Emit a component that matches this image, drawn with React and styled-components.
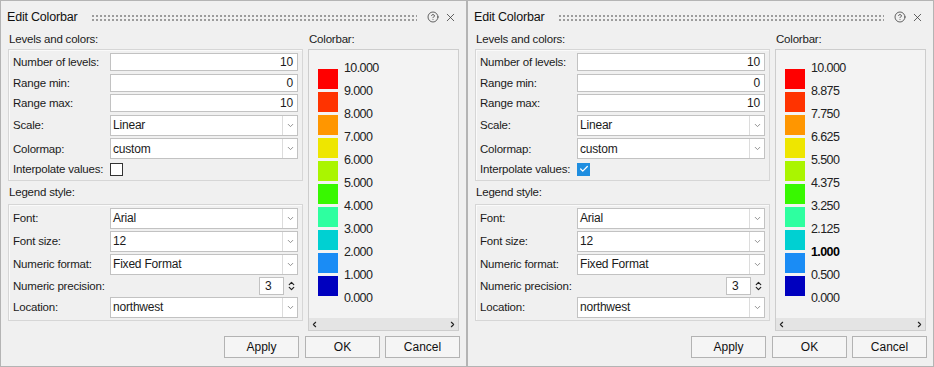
import React from 'react';
import styled, { createGlobalStyle } from 'styled-components';
import { CircleHelp, X, ChevronDown, ChevronUp, ChevronLeft, ChevronRight, Check } from 'lucide-react';

const GlobalStyle = createGlobalStyle`
  body {
    margin: 0;
    background: #ffffff;
    font-family: "Liberation Sans", Arial, sans-serif;
    color: #1b1b1b;
  }
`;

const COLORS = [
  '#ff0000',
  '#ff3300',
  '#ff9600',
  '#eee600',
  '#aaf500',
  '#38f800',
  '#2effa0',
  '#00d0d2',
  '#1a8cf5',
  '#0000bf',
];

const Screen = styled.div`
  display: flex;
  width: 934px;
  height: 367px;
`;

const Dialog = styled.div`
  box-sizing: border-box;
  width: ${(p) => p.$width}px;
  height: 367px;
  border: 1px solid #b4b4b4;
  background: #f0f0f0;
  display: flex;
  flex-direction: column;
`;

const TitleBar = styled.div`
  display: flex;
  align-items: center;
  height: 28px;
  padding: 4px 9px 0 6px;
  box-sizing: border-box;
`;

const Title = styled.span`
  font-size: 12.5px;
  letter-spacing: -0.2px;
  color: #111;
`;

const Grip = styled.div`
  flex: 1;
  height: 8px;
  margin: 2px 10px 0 14px;
  background-image: radial-gradient(circle, #9c9c9c 0.8px, transparent 1.2px);
  background-size: 4px 4px;
`;

const TitleIcons = styled.div`
  display: flex;
  align-items: center;
  gap: 5px;
  color: #333;
`;

const Body = styled.div`
  display: flex;
  gap: 5px;
  padding: 0 7px;
`;

const Column = styled.div`
  display: flex;
  flex-direction: column;
  width: ${(p) => p.$width}px;
`;

const SectionLabel = styled.div`
  height: ${(p) => p.$h || 20}px;
  display: flex;
  align-items: center;
  font-size: 11.5px;
  letter-spacing: -0.2px;
  padding-left: 1px;
`;

const GroupBox = styled.div`
  border: 1px solid #d6d6d6;
  box-shadow: inset 1px 1px 0 #fafafa;
  padding: 3px 4px ${(p) => p.$pb}px 3px;
  display: flex;
  flex-direction: column;
  gap: ${(p) => p.$gap}px;
`;

const Row = styled.div`
  display: grid;
  grid-template-columns: 98px 1fr;
  align-items: center;
  height: ${(p) => p.$h}px;
  font-size: 11.5px;
  letter-spacing: -0.2px;
`;

const Label = styled.span`
  padding-left: 1px;
  white-space: nowrap;
`;

const TextField = styled.div`
  box-sizing: border-box;
  height: ${(p) => p.$h || 18}px;
  border: 1px solid #c2c2c2;
  background: #fff;
  display: flex;
  align-items: center;
  justify-content: ${(p) => (p.$right ? 'flex-end' : 'flex-start')};
  padding: 0 4px;
  font-size: 12px;
`;

const SelectBox = styled.div`
  box-sizing: border-box;
  height: 21px;
  border: 1px solid #c2c2c2;
  background: #fff;
  display: flex;
  font-size: 12px;
`;

const SelectValue = styled.div`
  flex: 1;
  display: flex;
  align-items: center;
  padding-left: 2px;
  border-right: 1px solid #dcdcdc;
`;

const SelectArrow = styled.div`
  width: 14px;
  display: flex;
  align-items: center;
  justify-content: center;
  color: #8a8a8a;
`;

const CheckBox = styled.div`
  box-sizing: border-box;
  width: 13px;
  height: 13px;
  border: 1px solid ${(p) => (p.$checked ? '#1f8ee0' : '#333')};
  background: ${(p) => (p.$checked ? '#1f8ee0' : '#fff')};
  display: flex;
  align-items: center;
  justify-content: center;
  color: #fff;
`;

const SpinWrap = styled.div`
  grid-column: 2;
  display: flex;
  justify-content: flex-end;
  align-items: center;
  gap: 1px;
`;

const SpinField = styled(TextField)`
  width: 25px;
  padding-left: 5px;
`;

const SpinArrows = styled.div`
  width: 13px;
  height: 18px;
  display: flex;
  flex-direction: column;
  align-items: center;
  justify-content: center;
  color: #222;
`;

const ColorbarBox = styled.div`
  box-sizing: border-box;
  height: 282px;
  border: 1px solid #cdcdcd;
  background: #f3f3f3;
  display: flex;
  flex-direction: column;
`;

const Scale = styled.div`
  flex: 1;
  display: flex;
  gap: 6px;
  padding-left: 9px;
`;

const Swatches = styled.div`
  display: flex;
  flex-direction: column;
  gap: 3px;
  padding-top: 19px;
`;

const Swatch = styled.div`
  width: 20px;
  height: 20px;
  background: ${(p) => p.$color};
`;

const Ticks = styled.div`
  display: flex;
  flex-direction: column;
  padding-top: 6.5px;
`;

const Tick = styled.div`
  height: 23px;
  line-height: 23px;
  font-size: 12.5px;
  letter-spacing: -0.6px;
  font-weight: ${(p) => (p.$bold ? 700 : 400)};
  color: ${(p) => (p.$bold ? '#000' : '#222')};
`;

const Scrollbar = styled.div`
  height: 12px;
  background: #e4e4e4;
  display: flex;
  justify-content: space-between;
  align-items: center;
  padding: 0 1px;
  color: #222;
`;

const ButtonRow = styled.div`
  display: flex;
  justify-content: flex-end;
  gap: 5px;
  padding: 5px 6px 0 0;
`;

const Button = styled.div`
  box-sizing: border-box;
  width: 75px;
  height: 22px;
  margin-left: ${(p) => p.$ml || 0}px;
  border: 1px solid #b3b3b3;
  background: #f5f5f5;
  display: flex;
  align-items: center;
  justify-content: center;
  font-size: 12px;
  color: #111;
`;

const Select = ({ value }) => (
  <SelectBox>
    <SelectValue>{value}</SelectValue>
    <SelectArrow>
      <ChevronDown size={9} strokeWidth={2.5} />
    </SelectArrow>
  </SelectBox>
);

const EditColorbar = ({ width, interpolate, ticks, boldTick }) => (
  <Dialog $width={width}>
    <TitleBar>
      <Title>Edit Colorbar</Title>
      <Grip />
      <TitleIcons>
        <CircleHelp size={12} strokeWidth={1.5} />
        <X size={13} strokeWidth={1.4} />
      </TitleIcons>
    </TitleBar>
    <Body>
      <Column $width={295}>
        <SectionLabel>Levels and colors:</SectionLabel>
        <GroupBox $gap={2.5} $pb={3}>
          <Row $h={18}>
            <Label>Number of levels:</Label>
            <TextField $right>10</TextField>
          </Row>
          <Row $h={18}>
            <Label>Range min:</Label>
            <TextField $right>0</TextField>
          </Row>
          <Row $h={18}>
            <Label>Range max:</Label>
            <TextField $right>10</TextField>
          </Row>
          <Row $h={21}>
            <Label>Scale:</Label>
            <Select value="Linear" />
          </Row>
          <Row $h={21}>
            <Label>Colormap:</Label>
            <Select value="custom" />
          </Row>
          <Row $h={15}>
            <Label>Interpolate values:</Label>
            <CheckBox $checked={interpolate}>
              {interpolate && <Check size={10} strokeWidth={3} />}
            </CheckBox>
          </Row>
        </GroupBox>
        <SectionLabel $h={23}>Legend style:</SectionLabel>
        <GroupBox $gap={2} $pb={2}>
          <Row $h={21}>
            <Label>Font:</Label>
            <Select value="Arial" />
          </Row>
          <Row $h={21}>
            <Label>Font size:</Label>
            <Select value="12" />
          </Row>
          <Row $h={21}>
            <Label>Numeric format:</Label>
            <Select value="Fixed Format" />
          </Row>
          <Row $h={18}>
            <Label>Numeric precision:</Label>
            <SpinWrap>
              <SpinField>3</SpinField>
              <SpinArrows>
                <ChevronUp size={9} strokeWidth={3.2} style={{ marginBottom: -2 }} />
                <ChevronDown size={9} strokeWidth={3.2} style={{ marginTop: -2 }} />
              </SpinArrows>
            </SpinWrap>
          </Row>
          <Row $h={21}>
            <Label>Location:</Label>
            <Select value="northwest" />
          </Row>
        </GroupBox>
      </Column>
      <Column $width={151}>
        <SectionLabel>Colorbar:</SectionLabel>
        <ColorbarBox>
          <Scale>
            <Swatches>
              {COLORS.map((c) => (
                <Swatch key={c} $color={c} />
              ))}
            </Swatches>
            <Ticks>
              {ticks.map((t) => (
                <Tick key={t} $bold={t === boldTick}>
                  {t}
                </Tick>
              ))}
            </Ticks>
          </Scale>
          <Scrollbar>
            <ChevronLeft size={9} strokeWidth={3} />
            <ChevronRight size={9} strokeWidth={3} />
          </Scrollbar>
        </ColorbarBox>
      </Column>
    </Body>
    <ButtonRow>
      <Button>Apply</Button>
      <Button $ml={1}>OK</Button>
      <Button>Cancel</Button>
    </ButtonRow>
  </Dialog>
);

const LINEAR = ['10.000', '9.000', '8.000', '7.000', '6.000', '5.000', '4.000', '3.000', '2.000', '1.000', '0.000'];
const CUSTOM = ['10.000', '8.875', '7.750', '6.625', '5.500', '4.375', '3.250', '2.125', '1.000', '0.500', '0.000'];

export default function App() {
  return (
    <Screen>
      <GlobalStyle />
      <EditColorbar width={467} interpolate={false} ticks={LINEAR} />
      <EditColorbar width={467} interpolate ticks={CUSTOM} boldTick="1.000" />
    </Screen>
  );
}
